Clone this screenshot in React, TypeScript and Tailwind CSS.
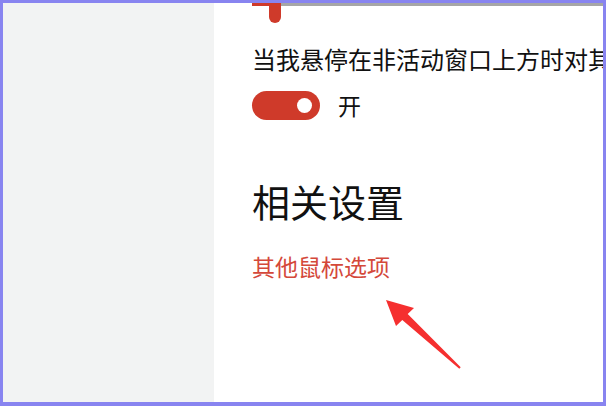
export default function App() {
  return (
    <div
      className="relative w-[606px] h-[406px] overflow-hidden border-[3px] border-b-4 border-[#8884f0] flex"
      style={{ fontFamily: '"Noto Sans CJK SC", "Noto Sans", sans-serif' }}
    >
      {/* Left nav pane */}
      <div className="w-[211px] h-full bg-[#f2f3f3] shrink-0" />

      {/* Settings content */}
      <div className="flex-1 bg-white overflow-hidden pl-[38px]">
        {/* slider, scrolled mostly out of view */}
        <div className="relative h-[20px] w-[400px]">
          <div className="flex h-[3px]">
            <div className="w-[23px] bg-[#cf3a2a]" />
            <div className="flex-1 bg-[#a6a6a6]" />
          </div>
          <div className="absolute left-[17px] top-0 w-[12px] h-[20px] rounded-b-full bg-[#cf3a2a]" />
        </div>

        <p className="mt-[20px] text-[24px] leading-[32px] text-[#111] whitespace-nowrap">
          当我悬停在非活动窗口上方时对其
        </p>

        <div className="mt-[14px] flex items-center gap-[18px]">
          <div className="w-[68px] h-[29px] rounded-full bg-[#cf3a2a] flex items-center justify-end pr-[8px]">
            <div className="w-[15px] h-[15px] rounded-full bg-white" />
          </div>
          <span className="text-[23px] leading-[32px] text-[#111]">开</span>
        </div>

        <h2 className="mt-[56px] text-[38px] leading-[48px] text-[#111]">相关设置</h2>

        <a className="block mt-[25px] text-[23px] leading-[32px] text-[#d4483a]">其他鼠标选项</a>
      </div>

      {/* annotation arrow */}
      <svg className="absolute left-0 top-0 pointer-events-none" width="606" height="406" viewBox="0 0 606 406">
        <polygon
          points="383,297 411,305 404.7,311.1 457.7,364.3 456.3,365.7 399.3,316.9 393,323"
          fill="#f52f2f"
        />
      </svg>
    </div>
  );
}
